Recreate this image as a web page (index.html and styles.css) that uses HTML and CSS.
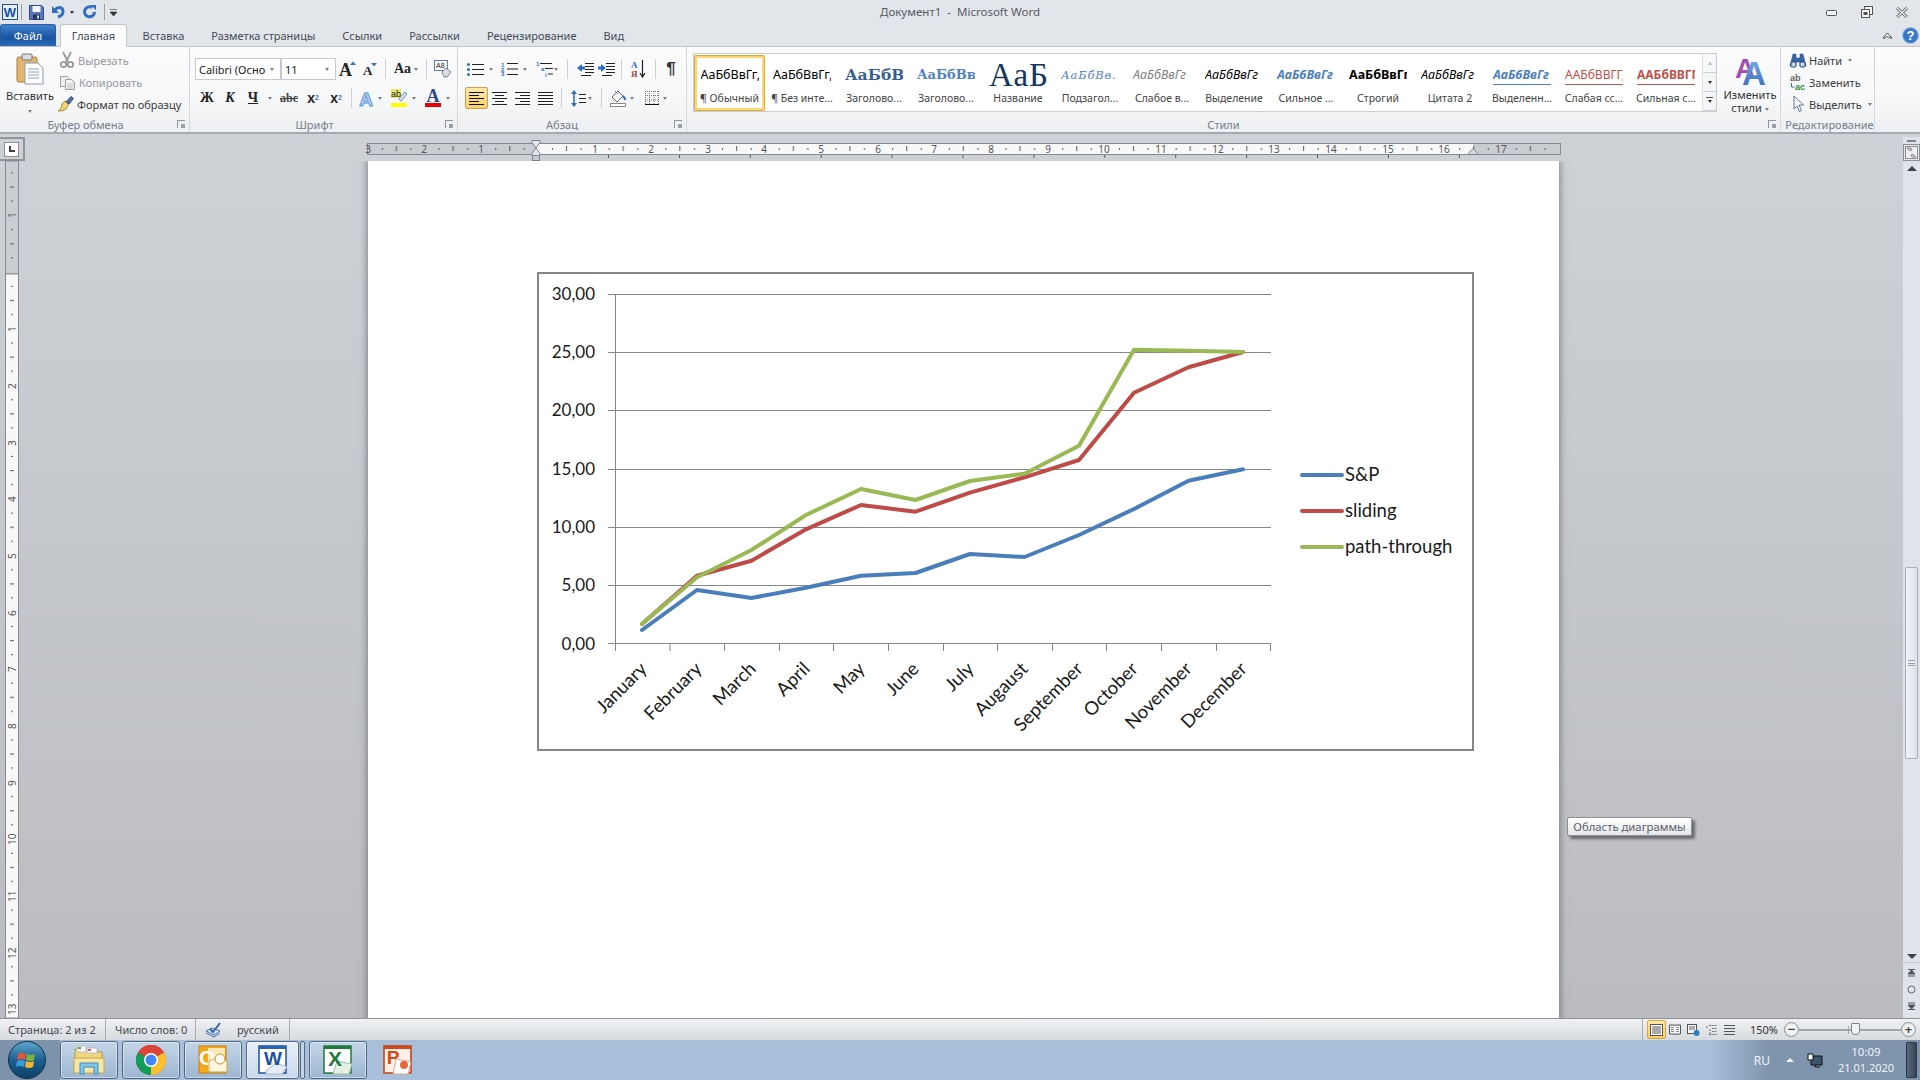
FILE: index.html
```html
<!DOCTYPE html>
<html lang="ru">
<head>
<meta charset="utf-8">
<title>Документ1 - Microsoft Word</title>
<link rel="stylesheet" href="styles.css">
</head>
<body>
<svg class="defs" width="0" height="0">
  <defs>
    <symbol id="al-left" viewBox="0 0 15 13"><path d="M0 .5h15M0 3.5h10M0 6.5h15M0 9.5h10M0 12.5h15" stroke="#111" fill="none"/></symbol>
    <symbol id="al-center" viewBox="0 0 15 13"><path d="M0 .5h15M3 3.5h9M0 6.5h15M3 9.5h9M0 12.5h15" stroke="#222" fill="none"/></symbol>
    <symbol id="al-right" viewBox="0 0 15 13"><path d="M0 .5h15M5 3.5h10M0 6.5h15M5 9.5h10M0 12.5h15" stroke="#222" fill="none"/></symbol>
    <symbol id="al-just" viewBox="0 0 15 13"><path d="M0 .5h15M0 3.5h15M0 6.5h15M0 9.5h15M0 12.5h15" stroke="#222" fill="none"/></symbol>
    <linearGradient id="gA" x1="0" y1="0" x2="0" y2="1"><stop offset="0" stop-color="#7fb2ea"/><stop offset="1" stop-color="#2f67b5"/></linearGradient>
    <linearGradient id="gOrb" x1="0" y1="0" x2="0" y2="1"><stop offset="0" stop-color="#5fa8cf"/><stop offset=".5" stop-color="#1c5f8f"/><stop offset="1" stop-color="#0e3f66"/></linearGradient>
  </defs>
</svg>
<div class="app">

  <header class="titlebar">
    <div class="qat">
      <svg width="16" height="16" viewBox="0 0 16 16"><rect x=".5" y=".5" width="15" height="15" fill="#e8f0fb" stroke="#1f4f9e"/><text x="8" y="13" text-anchor="middle" class="t-word-s">W</text></svg>
      <i class="qsep"></i>
      <svg class="q-save" width="15" height="15" viewBox="0 0 15 15"><path d="M.5.5h12l2 2v12H.5z" fill="#5a76b4" stroke="#2d4a8a"/><rect x="3.5" y="1" width="8" height="6" fill="#f4f6fa"/><rect x="4" y="9.5" width="7" height="5" fill="#26375f"/><rect x="8" y="10.5" width="2" height="3" fill="#cfd7e6"/></svg>
      <svg class="q-undo" width="13" height="14" viewBox="0 0 13 14"><path d="M3 5C6 1 11 2 11 6.500 11 9 9 11 6 12" fill="none" stroke="#2f6fc0" stroke-width="3"/><path d="M0 1v7h7z" fill="#2f6fc0"/></svg>
      <i class="caret dark q-caret"></i>
      <svg class="q-redo" width="14" height="14" viewBox="0 0 14 14"><path d="M9 2.500A5 5 0 1 0 11.500 7" fill="none" stroke="#2f6fc0" stroke-width="3"/><path d="M7 0h6v5z" fill="#2f6fc0"/></svg>
      <i class="qsep q-sep2"></i>
      <svg class="q-cust" width="7" height="7" viewBox="0 0 7 7"><path d="M0 .5h7M0 3h7L3.500 7z" fill="#333" stroke="#333" stroke-width=".6"/></svg>
    </div>
    <div class="doc-title">Документ1 &nbsp;-&nbsp; Microsoft Word</div>
    <div class="winctl">
      <svg width="12" height="7" viewBox="0 0 12 7"><rect x=".5" y="1.500" width="10" height="5" rx="1" fill="#f4f5f7" stroke="#555"/></svg>
      <svg width="12" height="12" viewBox="0 0 12 12"><rect x="3.500" y=".5" width="8" height="8" fill="#f4f5f7" stroke="#555"/><rect x=".5" y="3.500" width="8" height="8" fill="#f4f5f7" stroke="#555"/><rect x="2.500" y="6" width="4" height="3" fill="#555"/></svg>
      <svg width="12" height="11" viewBox="0 0 12 11"><path d="M1 1l10 9M11 1L1 10" stroke="#555" stroke-width="3"/><path d="M1 1l10 9M11 1L1 10" stroke="#f4f5f7" stroke-width="1.200"/></svg>
    </div>
  </header>

  <nav class="tabs">
    <span class="tab tab-file">Файл</span>
    <span class="tab tab-on">Главная</span>
    <span class="tab">Вставка</span>
    <span class="tab">Разметка страницы</span>
    <span class="tab">Ссылки</span>
    <span class="tab">Рассылки</span>
    <span class="tab">Рецензирование</span>
    <span class="tab">Вид</span>
    <span class="tabs-end">
      <svg width="11" height="8" viewBox="0 0 11 8"><path d="M1 7l4.500-5L10 7H7.500L5.500 5 3.500 7z" fill="#fff" stroke="#444"/></svg>
      <svg class="help" width="17" height="17" viewBox="0 0 17 17"><circle cx="8.500" cy="8.500" r="8" fill="#3b78c8" stroke="#a8c4e6"/><text x="8.500" y="13" text-anchor="middle" class="t-help">?</text></svg>
    </span>
  </nav>

  <section class="ribbon">
    <div class="group g-clip">
      <div class="clip-body">
        <div class="paste">
          <svg width="28" height="32" viewBox="0 0 28 32"><rect x="1" y="4" width="20" height="25" rx="2" fill="#e3b56f" stroke="#a8803f"/><rect x="6" y="1" width="10" height="6" rx="1" fill="#d8dde4" stroke="#777"/><path d="M9 10h13l5 5v16H9z" fill="#fff" stroke="#8f9aa8"/><path d="M12 16h11M12 19h11M12 22h11M12 25h11" stroke="#8ba3c2"/></svg>
          <span class="paste-label">Вставить</span>
          <i class="caret"></i>
        </div>
        <div class="clip-list">
          <div class="sbtn dim"><svg width="14" height="16" viewBox="0 0 14 16"><path d="M3 0l5 10M11 0L6 10" stroke="#9a9a9a" stroke-width="1.800" fill="none"/><circle cx="3.500" cy="12.500" r="2.700" fill="none" stroke="#9a9a9a" stroke-width="1.800"/><circle cx="10.500" cy="12.500" r="2.700" fill="none" stroke="#9a9a9a" stroke-width="1.800"/></svg>Вырезать</div>
          <div class="sbtn dim"><svg width="15" height="15" viewBox="0 0 15 15"><path d="M.5 1.500h7l2 2v8H.5z" fill="#eee" stroke="#a0a0a0"/><path d="M5.500 4.500h6l3 3v7h-9z" fill="#f6f6f6" stroke="#a0a0a0"/><path d="M7 9h6M7 11h6M7 13h6" stroke="#bbb"/></svg>Копировать</div>
          <div class="sbtn fp"><svg width="16" height="16" viewBox="0 0 16 16"><path d="M7 5l4 3-3 5c-2 2-6 2-8 2 2-1 4-4 4-7z" fill="#ecd27a" stroke="#a98f3e"/><path d="M8 6l5-5.500 2.500 2L11 8z" fill="#4f6f9f" stroke="#344d75"/></svg>Формат по образцу</div>
        </div>
      </div>
      <div class="glabel gl-18">Буфер обмена<i class="launch"></i></div>
    </div>

    <div class="group g-font">
      <div class="gbody">
        <div class="row">
          <div class="combo c-name"><span>Calibri (Осно</span><i class="caret"></i></div>
          <div class="combo c-size"><span>11</span><i class="caret"></i></div>
          <span class="tool w24"><svg width="18" height="16" viewBox="0 0 18 16"><text x="0" y="15" class="t-ser-b t16">A</text><path d="M11 4l3-3.500L17 4z" fill="#3f74b5"/></svg></span>
          <span class="tool w20"><svg width="16" height="14" viewBox="0 0 16 14"><text x="1" y="13" class="t-ser-b t12">A</text><path d="M9 1h6l-3 3.500z" fill="#3f74b5"/></svg></span>
          <i class="sep s-l5"></i>
          <span class="tool split w34 g3"><b class="aa">Aa</b><i class="caret"></i></span>
          <i class="sep s-l6"></i>
          <span class="tool w32"><svg width="18" height="18" viewBox="0 0 18 18"><rect x=".5" y=".5" width="13" height="10" fill="#fff" stroke="#5a7fae"/><text x="2" y="8" class="t-sans t7">A8</text><path d="M8 12l4-4 5 4-4 5H10z" fill="#d9dde4" stroke="#7a8796"/></svg></span>
        </div>
        <div class="row r2">
          <span class="tool w24 fmt-b">Ж</span>
          <span class="tool w22 fmt-i">К</span>
          <span class="tool w24 fmt-u">Ч</span>
          <span class="tool w10"><i class="caret"></i></span>
          <span class="tool w28 fmt-s">abc</span>
          <span class="tool w20 fmt-x">x<sub>2</sub></span>
          <span class="tool w26 fmt-x">x<sup>2</sup></span>
          <i class="sep s-m2"></i>
          <span class="tool split w30 g4"><svg width="16" height="17" viewBox="0 0 16 17"><text x="8" y="15.500" text-anchor="middle" class="t-sans-b t18 glow">A</text></svg><i class="caret"></i></span>
          <span class="tool split w34"><svg width="16" height="18" viewBox="0 0 16 18"><rect width="10" height="9" fill="#e8e868"/><text x="0" y="8" class="t-sans t9">ab</text><path d="M8 10l6-7 2 2-6 7z" fill="#dfe6ef" stroke="#6d87a8"/><rect y="14" width="16" height="4" fill="#ffff00"/></svg><i class="caret"></i></span>
          <span class="tool split w34"><svg width="16" height="18" viewBox="0 0 16 18"><text x="8" y="12.500" text-anchor="middle" class="t-ser-b t16 navy">A</text><rect y="14" width="16" height="4" fill="#e80000"/></svg><i class="caret"></i></span>
        </div>
      </div>
      <div class="glabel gl-18">Шрифт<i class="launch"></i></div>
    </div>

    <div class="group g-para">
      <div class="gbody">
        <div class="row">
          <span class="tool split w30"><svg width="17" height="13" viewBox="0 0 17 13"><path d="M5 1.500h12M5 6.500h12M5 11.500h12" stroke="#222"/><circle cx="1.500" cy="1.500" r="1.500" fill="#2f6fc0"/><circle cx="1.500" cy="6.500" r="1.500" fill="#2f6fc0"/><circle cx="1.500" cy="11.500" r="1.500" fill="#2f6fc0"/></svg><i class="caret"></i></span>
          <span class="tool split w34"><svg width="17" height="14" viewBox="0 0 17 14"><path d="M6 1.500h11M6 7h11M6 12.500h11" stroke="#222"/><text x="0" y="4.500" class="t-sans-b t6 blue">1</text><text x="0" y="9.500" class="t-sans-b t6 blue">2</text><text x="0" y="14" class="t-sans-b t6 blue">3</text></svg><i class="caret"></i></span>
          <span class="tool split w31 g1"><svg width="17" height="16" viewBox="0 0 17 16"><path d="M4 2.500h12M9 7.500h8M12 13h5" stroke="#222"/><text x="0" y="5" class="t-sans-b t6 blue">1</text><text x="5" y="10" class="t-sans-b t6 blue">a</text><text x="9" y="16" class="t-sans-b t6 blue">i</text></svg><i class="caret"></i></span>
          <i class="sep s-m7"></i>
          <span class="tool w21"><svg width="17" height="14" viewBox="0 0 17 14"><path d="M8 1.500h9M8 4.500h9M8 7.500h9M8 10.500h9M4 13.500h10" stroke="#222"/><path d="M0 6l5-4v2.500h3v3H5V10z" fill="#2f6fc0"/></svg></span>
          <span class="tool w21"><svg width="17" height="14" viewBox="0 0 17 14"><path d="M8 1.500h9M8 4.500h9M8 7.500h9M8 10.500h9M4 13.500h10" stroke="#222"/><path d="M8 6L3 2v2.500H0v3h3V10z" fill="#2f6fc0"/></svg></span>
          <i class="sep s-m4"></i>
          <span class="tool w24"><svg width="15" height="18" viewBox="0 0 15 18"><text x="0" y="8" class="t-ser-b t9 blue">А</text><text x="0" y="17" class="t-ser-b t9 brick">Я</text><path d="M11.500 0v16M9 13l2.500 4 2.500-4" stroke="#222" fill="none" stroke-width="1.200"/></svg></span>
          <i class="sep s-m5"></i>
          <span class="tool w20 pil">¶</span>
        </div>
        <div class="row r2">
          <span class="tool w23 active"><svg width="15" height="13"><use href="#al-left"/></svg></span>
          <span class="tool w22"><svg width="15" height="13"><use href="#al-center"/></svg></span>
          <span class="tool w24"><svg width="15" height="13"><use href="#al-right"/></svg></span>
          <span class="tool w23"><svg width="15" height="13"><use href="#al-just"/></svg></span>
          <i class="sep s-m4"></i>
          <span class="tool split w28 g2"><svg width="15" height="17" viewBox="0 0 15 17"><path d="M3 0l3 4H0zM3 17l3-4H0z" fill="#2f6fc0"/><path d="M2.200 4h1.600v9H2.200z" fill="#2f6fc0"/><path d="M8 4.500h7M8 8.500h7M8 12.500h7" stroke="#222"/></svg><i class="caret"></i></span>
          <i class="sep s-l7"></i>
          <span class="tool split w31 g4"><svg width="16" height="17" viewBox="0 0 16 17"><path d="M2 7l6-6 5 5-6 6z" fill="#f2f4f7" stroke="#666"/><path d="M5 1l3 3" stroke="#666"/><path d="M13 6c2 2 2 3 2 4" stroke="#2f6fc0" stroke-width="2" fill="none"/><rect x=".5" y="13.500" width="15" height="3" fill="#fff" stroke="#888"/></svg><i class="caret"></i></span>
          <span class="tool split w33 g4"><svg width="14" height="14" viewBox="0 0 14 14"><path d="M.5 0v13M4.500 0v13M9 0v13M13.500 0v13M0 .5h14M0 4.500h14M0 9h14" stroke="#777" stroke-dasharray="1 1" fill="none"/><path d="M0 13.500h14" stroke="#111"/></svg><i class="caret"></i></span>
        </div>
      </div>
      <div class="glabel gl-20">Абзац<i class="launch"></i></div>
    </div>

    <div class="group g-styles">
      <div class="styles-body">
        <div class="gallery">
          <div class="style sel"><span class="prev p-norm">АаБбВвГг,</span><span class="cap">¶ Обычный</span></div>
          <div class="style"><span class="prev p-norm">АаБбВвГг,</span><span class="cap">¶ Без инте...</span></div>
          <div class="style"><span class="prev p-h1">АаБбВв</span><span class="cap">Заголово...</span></div>
          <div class="style"><span class="prev p-h2">АаБбВв</span><span class="cap">Заголово...</span></div>
          <div class="style"><span class="prev p-title">АаБ</span><span class="cap">Название</span></div>
          <div class="style"><span class="prev p-sub">АаБбВв.</span><span class="cap">Подзагол...</span></div>
          <div class="style"><span class="prev p-weak">АаБбВвГг</span><span class="cap">Слабое в...</span></div>
          <div class="style"><span class="prev p-em">АаБбВвГг</span><span class="cap">Выделение</span></div>
          <div class="style"><span class="prev p-strongblue">АаБбВвГг</span><span class="cap">Сильное ...</span></div>
          <div class="style"><span class="prev p-strong">АаБбВвГг,</span><span class="cap">Строгий</span></div>
          <div class="style"><span class="prev p-em">АаБбВвГг</span><span class="cap">Цитата 2</span></div>
          <div class="style"><span class="prev p-iq">АаБбВвГг</span><span class="cap">Выделенн...</span></div>
          <div class="style"><span class="prev p-ref">ААБбВВГГ,</span><span class="cap">Слабая сс...</span></div>
          <div class="style"><span class="prev p-refb">ААБбВВГГ,</span><span class="cap">Сильная с...</span></div>
          <div class="gal-scroll">
            <span class="gs off"><i class="caret up"></i></span>
            <span class="gs"><i class="caret dark"></i></span>
            <span class="gs more"><i class="caret dark"></i></span>
          </div>
        </div>
        <div class="change">
          <svg width="30" height="30" viewBox="0 0 30 30"><text x="10" y="22" text-anchor="middle" class="t-sans-b t26 purple">A</text><text x="19" y="29" text-anchor="middle" class="t-sans-b t30 gblue">A</text></svg>
          <span>Изменить</span>
          <span class="ch2">стили <i class="caret"></i></span>
        </div>
      </div>
      <div class="glabel gl-styles">Стили<i class="launch"></i></div>
    </div>

    <div class="group g-edit">
      <div class="edit-list">
        <div class="sbtn"><svg width="16" height="15" viewBox="0 0 16 15"><path d="M3 1h3v4h4V1h3l3 12H10V9H6v4H0z" fill="#3a66a8" stroke="#23457c" stroke-width=".5"/><rect x="1" y="9" width="5" height="5" rx="1" fill="#c8d8ef" stroke="#23457c"/><rect x="10" y="9" width="5" height="5" rx="1" fill="#c8d8ef" stroke="#23457c"/></svg>Найти <i class="caret"></i></div>
        <div class="sbtn"><svg width="16" height="18" viewBox="0 0 16 18"><text x="0" y="8" class="t-sans-b t9 gray">ab</text><text x="5" y="17" class="t-sans-b t9 green">ac</text><path d="M1.500 10v4h3" stroke="#2f6fc0" fill="none"/></svg>Заменить</div>
        <div class="sbtn"><svg width="16" height="16" viewBox="0 0 16 16"><path d="M4 0v13l3-3 2.500 5.500 2-1L9 9h4.500z" fill="#fff" stroke="#5d7596"/></svg>Выделить <i class="caret"></i></div>
      </div>
      <div class="glabel gl-plus">Редактирование</div>
    </div>
  </section>

  <main class="workspace">
    <aside class="vcol">
      <div class="tabstop"><span class="tabstop-in"><i class="tab-l"></i></span></div>
      <svg class="vruler" width="14" height="857" viewBox="5 161 14 857">
        <defs>
          <pattern id="vt" patternUnits="userSpaceOnUse" x="0" y="272" width="14" height="56.700">
            <rect x="11" y="13.800" width="2" height="1" fill="#555"/>
            <rect x="10" y="28" width="5" height="1" fill="#555"/>
            <rect x="11" y="42" width="2" height="1" fill="#555"/>
          </pattern>
        </defs>
        <rect x="5.500" y="161" width="13" height="113" fill="#cacdd2" stroke="#868b92"/>
        <rect x="5.500" y="274" width="13" height="744" fill="#f8f8f9" stroke="#868b92"/>
        <rect x="6" y="162" width="12" height="856" fill="url(#vt)"/>
        <g class="rnum">
          <text transform="translate(16 218) rotate(-90)">1</text>
          <text transform="translate(16 332) rotate(-90)">1</text>
          <text transform="translate(16 389) rotate(-90)">2</text>
          <text transform="translate(16 446) rotate(-90)">3</text>
          <text transform="translate(16 502) rotate(-90)">4</text>
          <text transform="translate(16 559) rotate(-90)">5</text>
          <text transform="translate(16 616) rotate(-90)">6</text>
          <text transform="translate(16 672) rotate(-90)">7</text>
          <text transform="translate(16 729) rotate(-90)">8</text>
          <text transform="translate(16 786) rotate(-90)">9</text>
          <text transform="translate(16 845) rotate(-90)">10</text>
          <text transform="translate(16 902) rotate(-90)">11</text>
          <text transform="translate(16 959) rotate(-90)">12</text>
          <text transform="translate(16 1015) rotate(-90)">13</text>
        </g>
      </svg>
    </aside>

    <div class="mainarea">
      <svg class="hruler" width="1194" height="24" viewBox="367 137 1194 24">
        <defs>
          <pattern id="ht2" patternUnits="userSpaceOnUse" x="538" y="137" width="56.700" height="24">
            <rect x="14" y="11" width="1" height="2" fill="#555"/>
            <rect x="28" y="9" width="1" height="5" fill="#555"/>
            <rect x="42.500" y="11" width="1" height="2" fill="#555"/>
          </pattern>
          <pattern id="ht3" patternUnits="userSpaceOnUse" x="608" y="137" width="70.900" height="24">
            <rect x="0" y="18" width="1" height="3" fill="#555"/>
          </pattern>
        </defs>
        <rect x="367.500" y="143.500" width="1193" height="11" fill="#c9ccd1" stroke="#868b92"/>
        <rect x="536" y="144" width="937" height="10" fill="#f8f8f9"/>
        <rect x="368" y="144" width="1192" height="10" fill="url(#ht2)"/>
        <rect x="600" y="155" width="870" height="4" fill="url(#ht3)"/>
        <g class="rnum mid">
          <text x="368" y="153">3</text><text x="424" y="153">2</text><text x="481" y="153">1</text>
          <text x="595" y="153">1</text><text x="651" y="153">2</text><text x="708" y="153">3</text>
          <text x="764" y="153">4</text><text x="821" y="153">5</text><text x="878" y="153">6</text>
          <text x="934" y="153">7</text><text x="991" y="153">8</text><text x="1048" y="153">9</text>
          <text x="1104" y="153">10</text><text x="1161" y="153">11</text><text x="1218" y="153">12</text>
          <text x="1274" y="153">13</text><text x="1331" y="153">14</text><text x="1388" y="153">15</text>
          <text x="1444" y="153">16</text><text x="1501" y="153">17</text>
        </g>
        <path d="M532 140.500h8v2l-4 5.500-4-5.500zM532 155.500v-2l4-5.500 4 5.500v2z" fill="#e4e6ea" stroke="#7d838b"/>
        <rect x="532.500" y="155.500" width="7" height="5" fill="#c6c9ce" stroke="#7d838b"/>
        <path d="M1469 154.500v-2l4-4 4 4v2z" fill="#d8dade" stroke="#7d838b"/>
      </svg>

      <div class="docarea">
        <article class="page">
          <figure class="chart">
            <svg width="933" height="475" viewBox="539 274 933 475">
              <g class="grid">
                <path d="M608 294.500H1271M608 352.500H1271M608 410.500H1271M608 469.500H1271M608 527.500H1271M608 585.500H1271M608 643.500H1271"/>
                <path d="M615.500 294V651M670 644V651M724.500 644V651M779.500 644V651M833.500 644V651M888.500 644V651M943.500 644V651M997.500 644V651M1052.500 644V651M1106.500 644V651M1161.500 644V651M1216.500 644V651M1270.500 644V651"/>
              </g>
              <g class="ylab">
                <text x="595" y="300">30,00</text>
                <text x="595" y="358">25,00</text>
                <text x="595" y="416">20,00</text>
                <text x="595" y="475">15,00</text>
                <text x="595" y="533">10,00</text>
                <text x="595" y="591">5,00</text>
                <text x="595" y="650">0,00</text>
              </g>
              <g class="xlab">
                <text transform="translate(648 670) rotate(-45)">January</text>
                <text transform="translate(703 670) rotate(-45)">February</text>
                <text transform="translate(757 670) rotate(-45)">March</text>
                <text transform="translate(811 670) rotate(-45)">April</text>
                <text transform="translate(866 670) rotate(-45)">May</text>
                <text transform="translate(920 670) rotate(-45)">June</text>
                <text transform="translate(975 670) rotate(-45)">July</text>
                <text transform="translate(1029 670) rotate(-45)">Augaust</text>
                <text transform="translate(1084 670) rotate(-45)">September</text>
                <text transform="translate(1139 670) rotate(-45)">October</text>
                <text transform="translate(1193 670) rotate(-45)">November</text>
                <text transform="translate(1248 670) rotate(-45)">December</text>
              </g>
              <polyline class="ln l-b" points="642,630 697,590 751.500,598 806,587.700 861,575.700 915.500,573 970,554 1024.500,557 1079,535 1134,509 1188.500,480.700 1243,469.300"/>
              <polyline class="ln l-r" points="642,624 697,575.700 751.500,560.700 806,529.300 861,505 915.500,511.700 970,492.700 1024.500,477.300 1079,460 1134,392.700 1188.500,367.300 1243,352"/>
              <polyline class="ln l-g" points="642,624 697,577.300 751.500,550 806,515 861,489 915.500,500 970,481 1024.500,473.700 1079,445.700 1134,349.700 1188.500,350.700 1243,352"/>
              <g class="legend">
                <path class="ln l-b" d="M1302 475H1342"/><text x="1345" y="481">S&amp;P</text>
                <path class="ln l-r" d="M1302 511H1342"/><text x="1345" y="517">sliding</text>
                <path class="ln l-g" d="M1302 547H1342"/><text x="1345" y="553">path-through</text>
              </g>
            </svg>
          </figure>
        </article>
      </div>
    </div>

    <aside class="vscroll">
      <i class="vs-dash"></i>
      <span class="vs-view"><svg width="13" height="13" viewBox="0 0 13 13"><rect x=".5" y=".5" width="12" height="12" fill="#eef0f3" stroke="#8a8f96"/><path d="M2 2h4l1 2-2 1zM11 11H7L6 9l2-1z" fill="#e9c9d2" stroke="#555" stroke-width=".6"/></svg></span>
      <i class="vs-up"></i>
      <div class="vs-thumb"><i class="grip"></i></div>
      <i class="vs-down"></i>
      <div class="vs-nav">
        <svg width="9" height="8" viewBox="0 0 9 8"><path d="M1 .5h7M4.500 1L1 5h7zM1 7h7" stroke="#555" fill="#555"/></svg>
        <svg width="9" height="9" viewBox="0 0 9 9"><circle cx="4.500" cy="4.500" r="3.500" fill="none" stroke="#666"/></svg>
        <svg width="9" height="8" viewBox="0 0 9 8"><path d="M1 1h7M4.500 7L1 3h7zM1 7.500h7" stroke="#555" fill="#555"/></svg>
      </div>
    </aside>

    <div class="tooltip">Область диаграммы</div>
  </main>

  <footer class="status">
    <span class="st st1">Страница: 2 из 2</span>
    <span class="st st2">Число слов: 0</span>
    <span class="st st3"><svg width="17" height="14" viewBox="0 0 17 14"><path d="M1 8l6-3 8 3-6 4z" fill="#dbe6f5" stroke="#4672ad"/><path d="M1 10l8 4 6-4" fill="none" stroke="#4672ad"/><path d="M5 6l3 3 7-9" fill="none" stroke="#3a66a8" stroke-width="2"/></svg><span>русский</span></span>
    <span class="st-right">
      <span class="vw vw-on"><svg width="13" height="12" viewBox="0 0 13 12"><rect x=".5" y=".5" width="12" height="11" fill="#fff" stroke="#555"/><path d="M2 3h9M2 5h9M2 7h9M2 9h9" stroke="#555"/></svg></span>
      <span class="vw"><svg width="12" height="12" viewBox="0 0 12 12"><path d="M.5 1h5l.5 1 .5-1h5v9h-5l-.5 1-.5-1h-5z" fill="#f5f6f8" stroke="#555"/><path d="M2 3.500h3M2 5.500h3M2 7.500h3M7 3.500h3M7 5.500h3M7 7.500h3" stroke="#888"/></svg></span>
      <span class="vw"><svg width="13" height="12" viewBox="0 0 13 12"><rect x=".5" y=".5" width="9" height="9" fill="#f5f6f8" stroke="#555"/><path d="M2 3h6M2 5h6" stroke="#666"/><circle cx="9.500" cy="9" r="3" fill="#2a7fc0"/></svg></span>
      <span class="vw"><svg width="11" height="10" viewBox="0 0 11 10"><path d="M3 .5h8M6 3.500h5M6 6.500h5M3 9.500h8M0 2h2M3 5h2M3 8h2" stroke="#777" stroke-dasharray="2 .5"/></svg></span>
      <span class="vw"><svg width="11" height="10" viewBox="0 0 11 10"><path d="M0 .5h11M0 3.500h11M0 6.500h11M0 9.500h11" stroke="#555"/></svg></span>
      <span class="zoomtxt">150%</span>
      <span class="zbtn">−</span>
      <span class="zslider"><i class="zmid"></i><i class="zthumb"></i></span>
      <span class="zbtn">+</span>
    </span>
  </footer>

  <footer class="taskbar">
    <span class="orb-wrap">
      <svg width="38" height="38" viewBox="0 0 38 38"><circle cx="19" cy="19" r="18.500" fill="url(#gOrb)" stroke="#0d3048"/><path d="M10 13q4-2 8 0l-1 6q-4-2-8 0z" fill="#e2533a"/><path d="M19 13q4 2 8 0l-1 6q-4 2-8 0z" fill="#79b43c"/><path d="M9 20q4-2 8 0l-1 6q-4-2-8 0z" fill="#3d9ad8"/><path d="M18 20q4 2 8 0l-1 6q-4 2-8 0z" fill="#f3b52f"/></svg>
    </span>
    <span class="tb"><svg width="32" height="30" viewBox="0 0 32 30"><path d="M2 4h10l2 3h15v20H2z" fill="#f0d67f" stroke="#b9973f"/><rect x="4" y="1" width="9" height="6" fill="#fff" stroke="#bbb"/><rect x="14" y="3" width="10" height="5" fill="#fff" stroke="#bbb"/><rect x="5" y="2" width="3" height="2" fill="#47a447"/><rect x="15" y="4" width="3" height="2" fill="#d9534f"/><path d="M1 13h30v15H1z" fill="#f7e6a3" stroke="#c5a54c"/><path d="M7 18h18v11h-4v-7H11v7H7z" fill="#7fc4ec" stroke="#3e8dc0"/></svg></span>
    <span class="tb"><svg width="30" height="30" viewBox="0 0 30 30"><circle cx="15" cy="15" r="15" fill="#db4437"/><path d="M15 15L28 7.500A15 15 0 0 1 15 30z" fill="#fbc02d"/><path d="M15 15L15 30A15 15 0 0 1 2 7.500z" fill="#0f9d58"/><path d="M2 7.500A15 15 0 0 1 28 7.500H15z" fill="#db4437"/><circle cx="15" cy="15" r="7" fill="#fff"/><circle cx="15" cy="15" r="5.500" fill="#4285f4"/></svg></span>
    <span class="tb"><svg width="30" height="30" viewBox="0 0 30 30"><rect x="1" y="1" width="27" height="27" fill="#f6a81c" stroke="#c77f0c"/><rect x="10" y="3" width="17" height="23" fill="#fde9b8"/><text x="1" y="20" class="t-sans-b t19 t-white">O</text><path d="M11 16l9-4 9 4v11H11z" fill="#fff6df" stroke="#d2a149"/><circle cx="22" cy="14" r="5" fill="#fff" stroke="#d38f1e"/></svg></span>
    <span class="tb tb-on"><svg width="30" height="30" viewBox="0 0 30 30"><rect x="1" y="1" width="27" height="27" fill="#fff" stroke="#1f4f9e" stroke-width="1.500"/><rect x="1" y="1" width="27" height="3" fill="#2a63b5"/><path d="M18 18l11 4-5 7H8v-3z" fill="#e6edf7" stroke="#9fb4d1"/><text x="15" y="20" text-anchor="middle" class="t-sans-b t18 wblue">W</text></svg></span>
    <i class="tb-sliver"></i>
    <span class="tb"><svg width="30" height="30" viewBox="0 0 30 30"><rect x="1" y="1" width="27" height="27" fill="#fff" stroke="#1f7a3d" stroke-width="1.500"/><rect x="1" y="1" width="27" height="3" fill="#1f7a3d"/><path d="M14 16l15 3-3 10H10z" fill="#e4f0e4" stroke="#9bbd9b"/><text x="12" y="21" text-anchor="middle" class="t-sans-b t19 xgreen">X</text></svg></span>
    <span class="tb tb-plain"><svg width="30" height="30" viewBox="0 0 30 30"><rect x="1" y="1" width="27" height="27" fill="#fff0e8" stroke="#c83c12" stroke-width="1.500"/><rect x="1" y="1" width="27" height="3" fill="#d24a1a"/><path d="M13 14l15 3-3 12H10z" fill="#fff" stroke="#e0a58d"/><circle cx="21" cy="20" r="4" fill="#e8673a"/><text x="10" y="19" text-anchor="middle" class="t-sans-b t18 pred">P</text></svg></span>
    <span class="tray">
      <span class="lang">RU</span>
      <i class="tray-up"></i>
      <svg width="16" height="15" viewBox="0 0 16 15"><path d="M4 3h11v9H4z" fill="#3e556d" stroke="#111"/><path d="M1 1h5v6H1z" fill="#fff" stroke="#111"/><path d="M8 12v2h5" stroke="#111" fill="none"/></svg>
      <span class="clock"><span>10:09</span><span>21.01.2020</span></span>
      <i class="desk"></i>
    </span>
  </footer>
</div>
</body>
</html>
```

FILE: styles.css
```css
* { box-sizing: border-box; }
html, body { margin: 0; padding: 0; }
body { width: 1920px; height: 1080px; overflow: hidden; font-family: "Noto Sans", "Open Sans", sans-serif; font-size: 11px; color: #444; }
i { display: block; font-style: normal; }
svg { overflow: visible; }
.defs { position: absolute; }
.app { display: flex; flex-direction: column; width: 1920px; height: 1080px; position: relative; }

/* title bar */
.titlebar { height: 24px; flex: none; background: #e2e5e9; display: flex; align-items: center; }
.qat { width: 130px; display: flex; align-items: center; padding-left: 2px; flex: none; }
.qsep { width: 1px; height: 16px; background: #9aa0a8; margin: 0 7px 0 3px; flex: none; }
.q-save { margin-right: 8px; flex: none; }
.q-undo { flex: none; }
.q-caret { margin: 0 9px 0 5px; }
.q-redo { flex: none; }
.q-sep2 { margin: 0 5px 0 7px; }
.doc-title { flex: 1; text-align: center; font-size: 11.500px; color: #555c66; padding-bottom: 1px; }
.winctl { width: 130px; flex: none; display: flex; align-items: center; justify-content: flex-end; gap: 23px; padding-right: 12px; }

/* tabs */
.tabs { height: 23px; flex: none; display: flex; align-items: stretch; background: #e2e5e9; font-size: 11px; color: #434d59; border-bottom: 1px solid #bfc3c9; }
.tab { display: flex; align-items: center; padding: 0 13.500px; white-space: nowrap; }
.tab-file { width: 56px; margin-right: 4px; justify-content: center; padding: 0; color: #fff; background: linear-gradient(#3f84d0, #19529f 60%, #2a6db9); border-radius: 3px 3px 0 0; border: 1px solid #2a5f9f; border-bottom: 0; }
.tab-on { width: 67px; margin-right: 2px; justify-content: center; padding: 0; background: #fbfbfc; border: 1px solid #c2c6cc; border-bottom: 1px solid #fbfbfc; border-radius: 3px 3px 0 0; height: 23px; }
.tabs-end { margin-left: auto; display: flex; align-items: center; gap: 9px; padding-right: 1px; }

/* ribbon */
.ribbon { height: 87px; flex: none; display: flex; background: linear-gradient(#fbfbfc, #f7f8f9 60%, #edeff2); border-bottom: 2px solid #a6aab0; color: #333; }
.group { display: flex; flex-direction: column; border-right: 1px solid #d3d6db; position: relative; }
.g-clip { width: 190px; }
.g-font { width: 268px; }
.g-para { width: 229px; }
.g-styles { width: 1094px; }
.g-edit { width: 94px; }
.glabel { height: 16px; flex: none; line-height: 18px; text-align: center; color: #767f8a; font-size: 11px; position: relative; }
.gl-18 { padding-right: 18px; }
.gl-20 { padding-right: 20px; }
.gl-plus { padding-left: 4px; white-space: nowrap; }
.launch { position: absolute; right: 4px; top: 4px; width: 8px; height: 8px; border-left: 1px solid #8d949c; border-top: 1px solid #8d949c; }
.launch::after { content: ""; position: absolute; right: 0; bottom: 0; width: 4px; height: 4px; background: #9aa0a8; }
.gbody { flex: 1; padding: 11px 0 0 5px; }
.g-para .gbody { padding-left: 7px; }
.row { display: flex; align-items: center; height: 22px; }
.r2 { margin-top: 7px; }
.tool { display: flex; align-items: center; justify-content: center; height: 22px; flex: none; }
.split { justify-content: flex-end; gap: 5px; padding-right: 2px; }
.g1 { gap: 1px; } .g2 { gap: 2px; } .g3 { gap: 3px; } .g4 { gap: 4px; }
.w10 { width: 10px; } .w20 { width: 20px; } .w21 { width: 21px; } .w22 { width: 22px; } .w23 { width: 23px; } .w24 { width: 24px; } .w26 { width: 26px; } .w28 { width: 28px; } .w30 { width: 30px; } .w31 { width: 31px; } .w32 { width: 32px; } .w33 { width: 33px; } .w34 { width: 34px; } .w36 { width: 36px; }
.sep { width: 1px; height: 20px; background: #cfd2d7; flex: none; margin: 0 4px; }
.s-l5 { margin: 0 0 0 5px; }
.s-l7 { margin: 0 3px 0 7px; }
.s-l6 { margin: 0 0 0 6px; }
.s-m2 { margin: 0 2px; }
.s-m4 { margin: 0 4px; }
.s-m5 { margin: 0 5px; }
.s-m7 { margin: 0 7px; }
.caret { width: 0; height: 0; flex: none; border-left: 2.500px solid transparent; border-right: 2.500px solid transparent; border-top: 3px solid #7a7f86; display: inline-block; vertical-align: middle; }
.caret.dark { border-top-color: #333; }
.caret.up { border-top: 0; border-bottom: 4px solid #bcc0c6; }
.active { background: linear-gradient(#fde9a8, #fbcf6a); border: 1px solid #c9a24a; border-radius: 2px; }

/* clipboard */
.clip-body { flex: 1; display: flex; }
.paste { width: 60px; display: flex; flex-direction: column; align-items: center; padding-top: 6px; flex: none; }
.paste-label { line-height: 14px; margin-top: 4px; color: #333; }
.paste .caret { margin-top: 7px; }
.clip-list, .edit-list { display: flex; flex-direction: column; padding-top: 2px; flex: 1; }
.sbtn { height: 22px; display: flex; align-items: center; gap: 4px; white-space: nowrap; color: #3c3c3c; }
.fp { margin-left: -2px; gap: 3px; }
.dim { color: #969a9f; }
.edit-list { padding-left: 9px; }
.edit-list .sbtn { gap: 3px; }
.edit-list .caret { margin-left: 3px; }

/* font group */
.combo { height: 22px; background: #fff; border: 1px solid #c6cad0; display: flex; align-items: center; justify-content: space-between; padding: 0 6px 0 3px; color: #222; flex: none; font-size: 11px; }
.c-name { width: 86px; }
.c-size { width: 55px; }
.aa { font-family: "Liberation Serif", serif; font-size: 14px; color: #222; font-weight: 700; }
.fmt-b, .fmt-i, .fmt-u, .fmt-s, .fmt-x { font-family: "Liberation Serif", serif; color: #222; font-weight: 700; font-size: 14px; }
.fmt-i { font-style: italic; }
.fmt-u { text-decoration: underline; }
.fmt-s { font-size: 12px; text-decoration: line-through; color: #444; }
.fmt-x { font-family: "Liberation Sans", sans-serif; font-size: 14px; }
.fmt-x sub, .fmt-x sup { font-size: 7px; color: #3f74b5; line-height: 0; }
.pil { font-family: "Liberation Sans", sans-serif; font-weight: 700; font-size: 17px; color: #333; }

/* svg text */
.t-ser-b { font-family: "Liberation Serif", serif; font-weight: 700; fill: #222; }
.t-sans { font-family: "Liberation Sans", sans-serif; fill: #222; }
.t-sans-b { font-family: "Liberation Sans", sans-serif; font-weight: 700; fill: #222; }
.t6 { font-size: 6px; } .t7 { font-size: 7px; } .t8 { font-size: 8px; } .t9 { font-size: 9px; } .t12 { font-size: 13px; } .t16 { font-size: 18px; } .t18 { font-size: 19px; } .t19 { font-size: 21px; } .t26 { font-size: 28px; } .t30 { font-size: 33px; }
.glow { fill: #bcd8f5; stroke: #5b96d8; stroke-width: 1px; }
.navy { fill: #2b4a86; }
.blue { fill: #2f6fc0; }
.brick { fill: #a34a3c; }
.gray { fill: #666; }
.green { fill: #2d8a2d; }
.purple { fill: #a34fb0; }
.gblue { fill: url(#gA); }
.t-white { fill: #fff; }
.wblue { fill: #1c4fa0; }
.xgreen { fill: #1f7a3d; }
.pred { fill: #d24a1a; }
.t-word-s { font-family: "Liberation Sans", sans-serif; font-weight: 700; font-size: 13px; fill: #1c4fa0; }
.t-help { font-family: "Liberation Sans", sans-serif; font-weight: 700; font-size: 13px; fill: #fff; }

/* styles gallery */
.styles-body { flex: 1; display: flex; padding: 6px 0 0 6px; }
.gallery { width: 1024px; height: 59px; background: #fff; border: 1px solid #c9cdd3; display: flex; padding: 1px 0 0 0; flex: none; }
.style { width: 72px; height: 56px; display: flex; flex-direction: column; align-items: center; padding-top: 5px; border-radius: 2px; flex: none; }
.sel { box-shadow: inset 0 0 0 1px #dcae3f, inset 0 0 0 3px #fbd872; width: 71px; margin-right: 1px; }
.prev { width: 58px; height: 30px; line-height: 30px; overflow: hidden; white-space: nowrap; display: flex; align-items: center; font-family: "Noto Sans", sans-serif; font-size: 12.500px; color: #000; flex: none; }
.cap { font-size: 10.500px; line-height: 14px; color: #444; white-space: nowrap; margin-top: 1px; }
.p-h1 { font-family: "DejaVu Serif", serif; font-weight: 700; font-size: 15.500px; color: #365f91; }
.p-h2 { font-family: "DejaVu Serif", serif; font-weight: 700; font-size: 13px; color: #4f81bd; }
.p-title { font-family: "Liberation Serif", serif; font-size: 33px; letter-spacing: 1px; color: #17365d; }
.p-sub { font-family: "DejaVu Serif", serif; font-style: italic; font-size: 11.500px; color: #4f81bd; letter-spacing: .8px; }
.p-weak { font-style: italic; color: #808080; }
.p-em { font-style: italic; color: #000; }
.p-strongblue { font-style: italic; font-weight: 700; color: #4f81bd; }
.p-strong { font-weight: 700; color: #000; }
.p-iq { font-style: italic; font-weight: 700; color: #4f81bd; }
.p-iq, .p-ref, .p-refb { height: 21px; line-height: 21px; margin: 4px 0 5px; border-bottom: 1px solid #4f81bd; }
.p-ref { color: #c0504d; border-bottom-color: #c0504d; font-size: 12px; }
.p-refb { color: #c0504d; border-bottom-color: #c0504d; font-weight: 700; font-size: 12px; }
.gal-scroll { width: 14px; margin-left: auto; margin-top: -1px; display: flex; flex-direction: column; border-left: 1px solid #dfe2e6; flex: none; }
.gs { height: 19.500px; display: flex; align-items: center; justify-content: center; background: #f4f5f7; border-bottom: 1px solid #cdd1d6; }
.gs.off { background: #f7f8f9; }
.more { position: relative; }
.more::before { content: ""; position: absolute; top: 5px; left: 3px; width: 7px; height: 1px; background: #555; }
.change { flex: 1; display: flex; flex-direction: column; align-items: center; color: #333; padding: 3px 0 0 3px; line-height: 14px; }
.change svg { margin-bottom: 2px; }
.ch2 { margin-top: -1px; }
.gl-styles { padding-right: 20px; }

/* workspace */
.workspace { flex: 1; display: flex; background: linear-gradient(#ced1d6, #babcc0); padding-top: 3px; min-height: 0; position: relative; }
.vcol { width: 25px; flex: none; display: flex; flex-direction: column; }
.tabstop { height: 24px; width: 25px; border: 2px solid #90959c; border-left: 0; display: flex; align-items: center; justify-content: center; flex: none; }
.tabstop-in { width: 15px; height: 15px; background: #fff; border: 1px solid #8a8f96; display: flex; align-items: center; justify-content: center; }
.tab-l { width: 6px; height: 6px; border-left: 2px solid #444; border-bottom: 2px solid #444; }
.vruler { margin-left: 5px; flex: none; }
.rnum { font-family: "Noto Sans", sans-serif; font-size: 10px; fill: #555; }
.mid { text-anchor: middle; }
.mainarea { flex: 1; min-width: 0; display: flex; flex-direction: column; }
.hruler { margin-left: 342px; flex: none; }
.docarea { flex: 1; min-height: 0; overflow: hidden; padding-left: 343px; }
.page { width: 1191px; height: 1000px; background: #fff; box-shadow: 0 0 7px 1px rgba(60, 64, 70, .55); padding: 111px 0 0 169px; }
.chart { margin: 0; width: 937px; height: 479px; border: 2px solid #868686; background: #fff; }
.chart svg { display: block; overflow: hidden; }
.grid path { stroke: #868686; stroke-width: 1; fill: none; }
.ylab text, .xlab text, .legend text { font-family: Lato, "Open Sans", sans-serif; fill: #1a1a1a; }
.ylab text { text-anchor: end; font-size: 17px; }
.xlab text { text-anchor: end; font-size: 18.500px; }
.legend text { font-size: 18.500px; }
.ln { fill: none; stroke-width: 4px; stroke-linejoin: round; stroke-linecap: round; }
.l-b { stroke: #4a7ebb; }
.l-r { stroke: #be4b48; }
.l-g { stroke: #98b954; }

.vscroll { width: 17px; flex: none; background: #dfe3ea; display: flex; flex-direction: column; align-items: center; position: relative; }
.vs-dash { width: 9px; height: 2px; background: #7f858c; margin-top: 3px; flex: none; }
.vs-view { width: 17px; height: 17px; border: 1px solid #8a8f96; background: #e6e8ec; display: flex; align-items: center; justify-content: center; margin-top: 2px; flex: none; }
.vs-up { border-left: 5px solid transparent; border-right: 5px solid transparent; border-bottom: 5px solid #3c4148; margin-top: 5px; flex: none; }
.vs-thumb { width: 13px; height: 192px; margin-top: 396px; border: 1px solid #a9afb8; border-radius: 2px; background: linear-gradient(90deg, #f2f3f6, #dde1e7); display: flex; align-items: center; justify-content: center; flex: none; }
.grip { width: 7px; height: 6px; border-top: 1px solid #9aa0a8; border-bottom: 1px solid #9aa0a8; background: linear-gradient(#9aa0a8, #9aa0a8) center / 100% 1px no-repeat; }
.vs-down { border-left: 5px solid transparent; border-right: 5px solid transparent; border-top: 5px solid #3c4148; margin-top: 195px; flex: none; }
.vs-nav { margin-top: 3px; padding-top: 6px; border-top: 1px solid #c4c9d0; width: 17px; display: flex; flex-direction: column; align-items: center; gap: 8px; }
.tooltip { position: absolute; left: 1567px; top: 683px; width: 125px; height: 19px; line-height: 17px; text-align: center; font-size: 11.300px; color: #5a5f66; background: linear-gradient(#fff, #e4e6ea); border: 1px solid #8d9198; border-radius: 2px; box-shadow: 3px 3px 3px rgba(0, 0, 0, .45); }

/* status bar */
.status { height: 22px; flex: none; display: flex; align-items: center; background: linear-gradient(#eff1f3, #d8dbdf); border-top: 1px solid #8f9399; color: #46494e; font-size: 11px; }
.st { height: 21px; display: flex; align-items: center; border-right: 1px solid #a9adb3; flex: none; }
.st1 { width: 106px; padding-left: 8px; }
.st2 { width: 90px; padding-left: 9px; }
.st3 { width: 94px; padding-left: 9px; gap: 15px; }
.st-right { margin-left: auto; display: flex; align-items: center; height: 21px; border-left: 1px solid #a9adb3; width: 278px; padding-left: 4px; }
.vw { width: 18px; height: 19px; display: flex; align-items: center; justify-content: center; flex: none; }
.vw-on { width: 19px; background: linear-gradient(#fde9a8, #fbcf6a); border: 1px solid #d0a84c; border-radius: 2px; }
.zoomtxt { width: 40px; text-align: center; margin-left: 6px; color: #333; flex: none; }
.zbtn { width: 15px; height: 15px; border-radius: 50%; border: 1px solid #8d9198; background: radial-gradient(#fff, #dcdfe4); display: flex; align-items: center; justify-content: center; color: #444; font-weight: 700; font-size: 13px; line-height: 1; flex: none; }
.zslider { width: 104px; height: 2px; background: #a2a7ae; position: relative; flex: none; margin: 0 -1px; }
.zmid { position: absolute; left: 50px; top: -3px; width: 1px; height: 8px; background: #a2a7ae; }
.zthumb { position: absolute; left: 53px; top: -6px; width: 9px; height: 12px; background: #f2f3f5; border: 1px solid #7d838b; border-radius: 1px 1px 4px 4px; }

/* taskbar */
.taskbar { height: 40px; flex: none; display: flex; align-items: center; background: linear-gradient(90deg, #a7bfd9 0, #a7bfd9 1710px, #7e94ac 1770px); gap: 4px; }
.orb-wrap { width: 60px; height: 40px; margin-right: -4px; background: #7d93ab; display: flex; align-items: center; justify-content: center; padding-right: 7px; flex: none; }
.tb { width: 58px; height: 38px; border: 1px solid #54697f; border-radius: 3px; background: linear-gradient(#c4d5e8, #9cb6d2); display: flex; align-items: center; justify-content: center; flex: none; box-shadow: inset 0 0 0 1px rgba(255, 255, 255, .45); }
.tb-on { width: 53px; background: linear-gradient(#e8eff7, #c8d8ea); margin-right: -3px; }
.tb-sliver { width: 5px; height: 38px; border: 1px solid #54697f; border-radius: 2px; background: #c4d5e8; flex: none; }
.tb-plain { border: 0; background: none; box-shadow: none; margin-left: -2px; }
.tray { margin-left: auto; display: flex; align-items: center; color: #eef3f8; height: 40px; flex: none; }
.lang { font-size: 12px; margin-right: 16px; }
.tray-up { border-left: 4px solid transparent; border-right: 4px solid transparent; border-bottom: 4px solid #eef3f8; margin-right: 13px; }
.clock { width: 80px; margin-left: 3px; display: flex; flex-direction: column; align-items: center; font-size: 11.500px; line-height: 16px; }
.clock span:last-child { font-size: 11px; }
.desk { width: 11px; height: 36px; margin: 0 3px 0 0; background: linear-gradient(90deg, #596b7f, #3a4654); border: 1px solid #2c3642; border-radius: 1px; }
```
